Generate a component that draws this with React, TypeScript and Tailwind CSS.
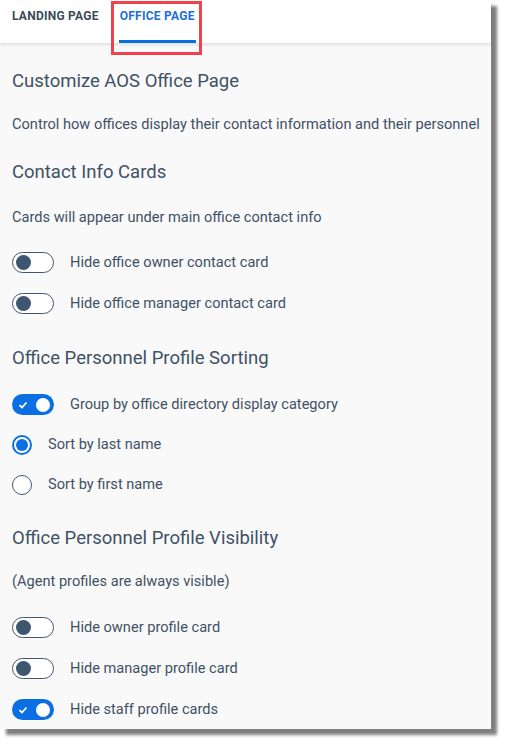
import React from "react";

const ink = "text-[#3f5166]";

const Toggle: React.FC<{ on?: boolean }> = ({ on }) =>
  on ? (
    <div className="relative w-[42px] h-[21px] rounded-full bg-[#0b6fe3] flex items-center justify-between px-[4px]">
      <svg width="10" height="10" viewBox="0 0 10 10" className="ml-[2px]">
        <path d="M1.5 5.2 L4 7.5 L8.5 2.5" fill="none" stroke="#fff" strokeWidth="1.8" />
      </svg>
      <div className="w-[14px] h-[14px] rounded-full bg-white" />
    </div>
  ) : (
    <div className="w-[42px] h-[21px] rounded-full border border-[#3f5673] bg-white flex items-center px-[3px]">
      <div className="w-[15px] h-[15px] rounded-full bg-[#3f5673]" />
    </div>
  );

const ToggleRow: React.FC<{ label: string; on?: boolean; className?: string }> = ({ label, on, className }) => (
  <div className={`h-[41px] flex items-center gap-[16px] ${className ?? ""}`}>
    <Toggle on={on} />
    <span className={`text-[14.6px] whitespace-nowrap ${ink}`}>{label}</span>
  </div>
);

const Radio: React.FC<{ label: string; checked?: boolean; className?: string }> = ({ label, checked, className }) => (
  <div className={`h-[40px] flex items-center gap-[16px] ${className ?? ""}`}>
    {checked ? (
      <div className="w-[20px] h-[20px] rounded-full border-2 border-[#0b6fe3] bg-white flex items-center justify-center">
        <div className="w-[12px] h-[12px] rounded-full bg-[#0b6fe3]" />
      </div>
    ) : (
      <div className="w-[20px] h-[20px] rounded-full border border-[#3f5673] bg-white" />
    )}
    <span className={`text-[14.6px] whitespace-nowrap ${ink}`}>{label}</span>
  </div>
);

const Heading: React.FC<{ children: React.ReactNode; className?: string }> = ({ children, className }) => (
  <div className={`h-[30px] pt-[4px] flex items-center text-[18.5px] whitespace-nowrap ${ink} ${className ?? ""}`}>{children}</div>
);

const Para: React.FC<{ children: React.ReactNode; className?: string }> = ({ children, className }) => (
  <div className={`h-[24px] flex items-center text-[14.6px] whitespace-nowrap ${ink} ${className ?? ""}`}>{children}</div>
);

export default function App() {
  return (
    <div className="w-[506px] h-[744px] bg-white" style={{ fontFamily: "Roboto, 'Liberation Sans', sans-serif" }}>
      <div className="w-[491px] h-[729px] bg-[#f9f9f9] shadow-[6px_6px_3px_rgba(0,0,0,0.5)] flex flex-col">
        <div className="relative h-[43px] bg-white shadow-[0_2px_3px_rgba(0,0,0,0.1)] flex items-start pl-[12px] gap-[21px]">
          <div className="pt-[7px] text-[12px] font-bold text-[#3d4a58] tracking-[0.25px]">LANDING PAGE</div>
          <div className="relative h-[43px] w-[76px]">
            <div className="pt-[7px] text-[12px] font-bold text-[#1f6fd8] tracking-[0.25px]">OFFICE PAGE</div>
            <div className="absolute left-[-1px] right-0 bottom-0 h-[3px] bg-[#0b6fe3]" />
          </div>
          <div className="absolute left-[111px] top-[1px] w-[91px] h-[54px] border-[3px] border-[#f0424a] z-10" />
        </div>

        <div className="px-[12px] flex flex-col">
          <Heading className="mt-[22px]">Customize AOS Office Page</Heading>
          <Para className="mt-[18px]">Control how offices display their contact information and their personnel</Para>

          <Heading className="mt-[19px]">Contact Info Cards</Heading>
          <Para className="mt-[20px]">Cards will appear under main office contact info</Para>
          <ToggleRow className="mt-[12px]" label="Hide office owner contact card" />
          <ToggleRow label="Hide office manager contact card" />

          <Heading className="mt-[18px]">Office Personnel Profile Sorting</Heading>
          <ToggleRow className="mt-[12px]" on label="Group by office directory display category" />
          <Radio checked label="Sort by last name" />
          <Radio label="Sort by first name" />

          <Heading className="mt-[17px]">Office Personnel Profile Visibility</Heading>
          <Para className="mt-[18px]">(Agent profiles are always visible)</Para>
          <ToggleRow className="mt-[13px]" label="Hide owner profile card" />
          <ToggleRow label="Hide manager profile card" />
          <ToggleRow on label="Hide staff profile cards" />
        </div>
      </div>
    </div>
  );
}
